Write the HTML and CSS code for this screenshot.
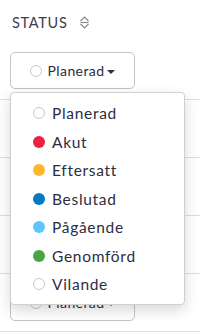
FILE: index.html
```html
<!DOCTYPE html>
<html lang="sv">
<head>
  <meta charset="utf-8">
  <title>Status</title>
  <link rel="stylesheet" href="styles.css">
</head>
<body>
  <div class="table">
    <div class="head">
      <span class="head-label">STATUS</span>
      <svg class="sort-icon" width="11" height="13" viewBox="0 0 11 13">
        <path d="M1.5 5 L5.5 1 L9.5 5" fill="none" stroke="#8a8a8a" stroke-width="1.2"/>
        <path d="M1.5 6.5 H9.5" stroke="#8a8a8a" stroke-width="1.2"/>
        <path d="M1.5 8 L5.5 12 L9.5 8" fill="none" stroke="#8a8a8a" stroke-width="1.2"/>
      </svg>
    </div>

    <div class="row">
      <div class="cell">
        <button class="status-btn">
          <span class="dot dot-empty"></span>
          <span>Planerad</span>
          <span class="caret"></span>
        </button>

        <div class="menu">
          <div class="menu-item"><span class="dot dot-empty"></span>Planerad</div>
          <div class="menu-item"><span class="dot dot-akut"></span>Akut</div>
          <div class="menu-item"><span class="dot dot-eftersatt"></span>Eftersatt</div>
          <div class="menu-item"><span class="dot dot-beslutad"></span>Beslutad</div>
          <div class="menu-item"><span class="dot dot-pagaende"></span>Pågående</div>
          <div class="menu-item"><span class="dot dot-genomford"></span>Genomförd</div>
          <div class="menu-item"><span class="dot dot-empty"></span>Vilande</div>
        </div>
      </div>
    </div>
    <div class="row"></div>
    <div class="row"></div>
    <div class="row"></div>
    <div class="row">
      <div class="cell">
        <button class="status-btn">
          <span class="dot dot-empty"></span>
          <span>Planerad</span>
          <span class="caret"></span>
        </button>
      </div>
    </div>
  </div>
</body>
</html>
```

FILE: styles.css
```css
body {
  margin: 0;
  font-family: 'Lato', 'Noto Sans', sans-serif;
  color: #2b2d42;
  background: #fff;
}

.table {
  width: 200px;
}

.head {
  height: 42px;
  box-sizing: border-box;
  padding: 2px 12px 0 12px;
  display: flex;
  align-items: center;
  gap: 11px;
}

.head-label {
  font-size: 14.5px;
  color: #3a3d4f;
  letter-spacing: 0.7px;
}

.sort-icon {
  display: block;
}

.row {
  height: 58px;
  box-sizing: border-box;
  border-bottom: 1px solid #dedede;
}

.cell {
  position: relative;
  padding: 10px 0 0 10px;
}

.status-btn {
  width: 125px;
  height: 37px;
  display: flex;
  align-items: center;
  justify-content: center;
  gap: 6px;
  border: 1px solid #c4c4c4;
  border-radius: 5px;
  background: #fff;
  font-family: inherit;
  font-size: 14px;
  letter-spacing: 0.4px;
  color: #2b2d42;
  padding: 0;
}

.caret {
  width: 0;
  height: 0;
  border-left: 4px solid transparent;
  border-right: 4px solid transparent;
  border-top: 4px solid #333;
  margin-left: -3px;
  margin-top: 2px;
}

.dot {
  width: 12px;
  height: 12px;
  border-radius: 50%;
  flex-shrink: 0;
  box-sizing: border-box;
}

.dot-empty {
  border: 1px solid #c8c8c8;
  background: #fff;
}

.dot-akut { background: #ea2340; }
.dot-eftersatt { background: #ffb62b; }
.dot-beslutad { background: #0579c6; }
.dot-pagaende { background: #5ec5fd; }
.dot-genomford { background: #48a545; }

.menu {
  position: absolute;
  top: 50px;
  left: 10px;
  width: 175px;
  height: 213px;
  box-sizing: border-box;
  background: #fff;
  border: 1px solid #cfcfcf;
  border-radius: 4px;
  box-shadow: 0 5px 14px rgba(0, 0, 0, 0.16);
  padding: 6px 0;
  z-index: 2;
}

.menu-item {
  height: 28.5px;
  display: flex;
  align-items: center;
  gap: 7px;
  padding-left: 22px;
  font-size: 15.5px;
  letter-spacing: 0.7px;
}
```
